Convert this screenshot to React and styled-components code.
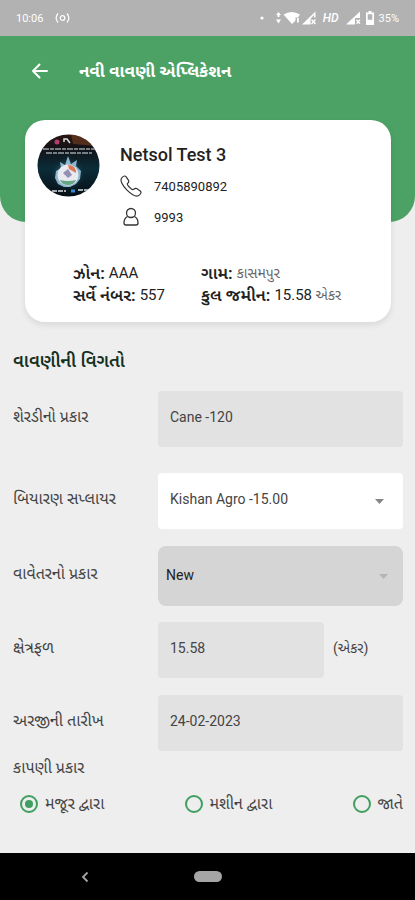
import React, { useState } from "react";
import styled, { createGlobalStyle } from "styled-components";

const GlobalStyle = createGlobalStyle`
  *, *::before, *::after { box-sizing: border-box; }
  body {
    margin: 0;
    background: #eeeeee;
    color: #444;
    font-family: Roboto, "Noto Sans Gujarati", "Noto Sans", sans-serif;
    font-size: 14px;
  }
  button, input, select { font: inherit; color: inherit; }
`;

const Screen = styled.div`
  display: flex;
  flex-direction: column;
  min-height: 100vh;
`;

const StatusBar = styled.div`
  display: flex;
  align-items: center;
  justify-content: space-between;
  height: 36px;
  padding: 0 16px;
  background: #b2b2b2;
  color: #fff;
  font-size: 11px;
`;

const StatusGroup = styled.div`
  display: flex;
  align-items: center;
  gap: ${(p) => p.$gap}px;
`;

const Network = styled.span`
  margin-right: 2px;
  font-size: 12px;
  font-style: italic;
  font-weight: 500;
`;

const Hero = styled.header`
  display: flex;
  align-items: flex-start;
  height: 186px;
  padding: 19px 24px;
  border-radius: 0 0 26px 26px;
  background: #4ba264;
  color: #fff;
`;

const BackButton = styled.button`
  display: flex;
  align-items: center;
  justify-content: center;
  width: 32px;
  height: 32px;
  margin-right: 23px;
  padding: 0;
  border: 0;
  background: none;
`;

const PageTitle = styled.h1`
  margin: 0;
  font-size: 17px;
  font-weight: 700;
  line-height: 32px;
`;

const Card = styled.section`
  margin: -102px 24px 0 25px;
  padding: 14px 12px 16px;
  border-radius: 20px;
  background: #fff;
  box-shadow: 0 3px 6px rgba(0, 0, 0, 0.09);
  color: #222;
`;

const Profile = styled.div`
  display: flex;
  gap: 20px;
`;

const ProfileText = styled.div`
  display: flex;
  flex-direction: column;
  padding-top: 8px;
`;

const Name = styled.h2`
  margin: 0 0 6px;
  font-size: 18px;
  font-weight: 500;
  line-height: 26px;
`;

const Contact = styled.div`
  display: grid;
  grid-template-columns: 22px auto;
  align-items: center;
  column-gap: 12px;
  height: 31px;
  padding-bottom: 7px;
  font-size: 13px;
`;

const Facts = styled.dl`
  display: grid;
  grid-template-columns: 128px 1fr;
  margin: 26px 0 0;
  padding-left: 36px;
`;

const Fact = styled.div`
  display: flex;
  gap: 4px;
  font-size: 17px;
  line-height: 22px;
  white-space: nowrap;
`;

const FactName = styled.dt`
  font-weight: 600;
`;

const FactValue = styled.dd`
  margin: 0;
  font-size: ${(p) => (p.$small ? 14 : 15)}px;
  color: ${(p) => (p.$small ? "#666" : "#222")};
`;

const Unit = styled.small`
  font-size: 14px;
  color: #666;
`;

const Form = styled.form`
  display: flex;
  flex-direction: column;
  flex: 1;
  padding: 27px 12px 24px 13px;
`;

const SectionTitle = styled.h2`
  margin: 0 0 18px;
  color: #14301f;
  font-size: 18px;
  font-weight: 600;
  line-height: 24px;
`;

const FieldRow = styled.div`
  display: grid;
  grid-template-columns: 145px 1fr;
  align-items: center;
  margin-bottom: ${(p) => p.$after}px;
`;

const Label = styled.label`
  padding-bottom: 4px;
  font-size: 16px;
  line-height: 24px;
`;

const FieldLine = styled.div`
  display: grid;
  grid-template-columns: ${(p) => (p.$unit ? "1fr 79px" : "1fr")};
`;

const TextBox = styled.input`
  width: 100%;
  min-width: 0;
  height: 56px;
  padding: 0 12px 4px;
  border: 0;
  border-radius: 4px;
  background: #e2e2e2;
`;

const FieldUnit = styled.span`
  padding-left: 9px;
  line-height: 52px;
`;

const SelectWrap = styled.div`
  display: grid;
  align-items: center;

  > * { grid-area: 1 / 1; }
  > svg {
    justify-self: end;
    margin-right: ${(p) => (p.$muted ? 15 : 19)}px;
    color: ${(p) => (p.$muted ? "#b5b5b5" : "#858585")};
    pointer-events: none;
  }
`;

const Select = styled.select`
  appearance: none;
  width: 100%;
  height: ${(p) => (p.$muted ? 60 : 56)}px;
  padding: ${(p) => (p.$muted ? "0 32px 2px 8px" : "0 36px 4px 12px")};
  border: 0;
  border-radius: ${(p) => (p.$muted ? 8 : 4)}px;
  background: ${(p) => (p.$muted ? "#d5d5d5" : "#fff")};
  opacity: 1;
  color: ${(p) => (p.$muted ? "#222" : "#444")};
`;

const Harvest = styled.fieldset`
  display: grid;
  margin: 0;
  padding: 0;
  border: 0;
  font-size: 16px;
`;

const Legend = styled.legend`
  padding: 0;
  line-height: 24px;
`;

const Choices = styled.div`
  display: flex;
  justify-content: space-between;
  padding: 12px 0 0 7px;
`;

const Choice = styled.label`
  display: flex;
  align-items: center;
  gap: 7px;
  line-height: 24px;
`;

const Radio = styled.input`
  appearance: none;
  display: grid;
  place-items: center;
  width: 18px;
  height: 18px;
  margin: 0;
  border: 2px solid #3f9f61;
  border-radius: 50%;

  &:checked::before {
    content: "";
    width: 8px;
    height: 8px;
    border-radius: 50%;
    background: #3f9f61;
  }
`;

const NavBar = styled.nav`
  display: grid;
  grid-template-columns: 1fr 28px 1fr;
  align-items: center;
  height: 47px;
  background: #000;
`;

const NavBack = styled.button`
  display: flex;
  justify-self: center;
  margin-right: 24px;
  padding: 4px;
  border: 0;
  background: none;
`;

const NavHome = styled.button`
  height: 11px;
  padding: 0;
  border: 0;
  border-radius: 6px;
  background: #a5a5a5;
`;

const HotspotIcon = () => (
  <svg width="15" height="12" viewBox="0 0 15 12" fill="none" stroke="#fff" strokeWidth="1.2" aria-hidden="true">
    <circle cx="7.5" cy="6" r="2.3" />
    <path d="M3 1.500Q-.8 6 3 10.500M12 1.500Q15.800 6 12 10.500" />
  </svg>
);

const StatusIcons = () => (
  <svg width="58" height="16" viewBox="0 0 58 16" fill="#fff" aria-hidden="true">
    <circle cx="2" cy="8" r="1.600" />
    <path d="M18.500 2l2.500 3h-1.500v2h-2V5H16zM18.500 13.500l2.500-4h-5z" />
    <path d="M23.500 4.500Q31.500-.5 40 4.500L38 7.500H35.500V10.500L32 14z" />
    <path d="M37 8h1.800v4.500H37z" />
    <path d="M42 14.500L55.500 1.500V7.500h-1.500V5L47 12.500h3.500v2z" />
    <path d="M45 13.500l5.500-5.500v5.500z" />
    <path d="M51.500 9.500l4 4.500m0-4.500l-4 4.500" stroke="#fff" strokeWidth="1.300" />
  </svg>
);

const SecondSignal = () => (
  <svg width="15" height="16" viewBox="0 0 15 16" fill="#fff" aria-hidden="true">
    <path d="M0 14.500L14 1.500V8H9v6.500z" />
    <path d="M10.500 9.800l3.500 4m0-4l-3.500 4" stroke="#fff" strokeWidth="1.300" />
  </svg>
);

const BatteryIcon = () => (
  <svg width="8" height="14" viewBox="0 0 8 14" aria-hidden="true">
    <path d="M2.500 0h3v1.500H8V14H0V1.500h2.500zM1.700 3.200v5.500h4.600v-5.500z" fill="#fff" fillRule="evenodd" />
  </svg>
);

const ArrowIcon = () => (
  <svg width="18" height="16" viewBox="0 0 18 16" fill="none" stroke="#fff" strokeWidth="2" strokeLinecap="round" strokeLinejoin="round" aria-hidden="true">
    <path d="M16 8H2M8.500 1.500L2 8l6.500 6.500" />
  </svg>
);

const PhoneIcon = () => (
  <svg width="22" height="22" viewBox="0 0 22 22" fill="none" stroke="#333" strokeWidth="1.200" strokeLinejoin="round" aria-hidden="true">
    <path d="M2.200 2.400C3.800.5 5.300.6 6.400 2.200L8.500 5.400C9.400 6.800 8.600 7.500 7.600 8.500C6.900 9.300 7.500 10 8.300 11L11 13.700C12 14.500 12.800 15.100 13.600 14.400C14.700 13.400 15.300 12.700 16.700 13.600L19.900 15.700C21.400 16.800 21.500 18.200 19.600 19.900C16.800 22.600 11.300 19.300 6.800 14.800C2.500 10.500-.8 5.200 2.200 2.400Z" />
  </svg>
);

const PersonIcon = () => (
  <svg width="22" height="20" viewBox="0 0 22 20" fill="none" stroke="#333" strokeWidth="1.300" strokeLinejoin="round" aria-hidden="true">
    <circle cx="11" cy="6" r="4.500" />
    <path d="M7.500 9.500C5 10.700 4 13 4 16Q4 18 6 18H16Q18 18 18 16C18 13 17 10.700 14.500 9.500" />
  </svg>
);

const CaretIcon = () => (
  <svg width="9" height="5" viewBox="0 0 9 5" fill="currentColor" aria-hidden="true">
    <path d="M0 0h9L4.500 5z" />
  </svg>
);

const ChevronIcon = () => (
  <svg width="8" height="12" viewBox="0 0 8 12" fill="none" stroke="#a5a5a5" strokeWidth="1.800" aria-hidden="true">
    <path d="M6.500 1.500L2 6l4.500 4.500" />
  </svg>
);

const Avatar = () => (
  <svg width="63" height="63" viewBox="0 0 63 63" role="img" aria-label="Netsol Test 3">
    <defs>
      <clipPath id="avatar-round"><circle cx="31.500" cy="31.500" r="31" /></clipPath>
      <linearGradient id="avatar-night" x2="0" y2="1">
        <stop offset="0" stopColor="#2b1711" />
        <stop offset=".24" stopColor="#111217" />
        <stop offset=".55" stopColor="#0b2c38" />
        <stop offset="1" stopColor="#070d14" />
      </linearGradient>
      <radialGradient id="avatar-glow">
        <stop offset="0" stopColor="#77b8d4" />
        <stop offset="1" stopColor="#164a62" stopOpacity="0" />
      </radialGradient>
    </defs>
    <g clipPath="url(#avatar-round)">
      <path fill="url(#avatar-night)" d="M0 0h63v63H0z" />
      <path fill="#77411f" opacity=".6" d="M34 0h20l6 12-24-2z" />
      <circle cx="20" cy="8" r="2.500" fill="#b43d70" />
      <path d="M27 8V5h3l3 4" fill="none" stroke="#ddd" strokeWidth="1.500" />
      <path d="M6 15h52M9 19h46" stroke="#dfe8ec" strokeDasharray="6 1 4 1" />
      <circle cx="31" cy="40" r="17" fill="url(#avatar-glow)" opacity=".7" />
      <path d="M31 22l3 8 6-4-1 6 5 5-1 8-4 5-6 3h-6l-6-3-3-6 1-7 5-3-1-6 5 3z" fill="#8eb6cd" />
      <circle cx="31" cy="41" r="10.500" fill="#e8eaf0" />
      <path d="M31 31q8 0 8 8l-7-4z" fill="#dd7653" />
      <path d="M23 46q8 2 16 0-2 5-8 5t-8-5" fill="#67a587" />
      <path d="M26 39l5-4 4 6-4 3z" fill="#9490b5" />
      <path d="M15 57h14M41 56h10" stroke="#d9e1e4" strokeWidth="1.500" strokeDasharray="5 1" />
      <path d="M34 57h4" stroke="#348bd5" strokeWidth="3" />
    </g>
  </svg>
);

const FACTS = [
  { name: "ઝોન:", value: "AAA" },
  { name: "ગામ:", value: "કાસમપુર", small: true },
  { name: "સર્વે નંબર:", value: "557" },
  { name: "કુલ જમીન:", value: "15.58", unit: "એકર" },
];

const FIELDS = [
  { id: "cane", label: "શેરડીનો પ્રકાર", value: "Cane -120", after: 26 },
  { id: "seed", label: "બિયારણ સપ્લાયર", value: "Kishan Agro -15.00", select: true, after: 17 },
  { id: "planting", label: "વાવેતરનો પ્રકાર", value: "New", select: true, muted: true, after: 16 },
  { id: "area", label: "ક્ષેત્રફળ", value: "15.58", unit: "(એકર)", after: 17 },
  { id: "date", label: "અરજીની તારીખ", value: "24-02-2023", after: 5 },
];

const HARVEST = ["મજૂર દ્વારા", "મશીન દ્વારા", "જાતે"];

function Field({ id, label, value, select, muted, unit, after }) {
  return (
    <FieldRow $after={after}>
      <Label htmlFor={id}>{label}</Label>
      {select ? (
        <SelectWrap $muted={muted}>
          <Select id={id} $muted={muted} disabled={muted} defaultValue={value}>
            <option>{value}</option>
          </Select>
          <CaretIcon />
        </SelectWrap>
      ) : (
        <FieldLine $unit={unit}>
          <TextBox id={id} value={value} readOnly />
          {unit && <FieldUnit>{unit}</FieldUnit>}
        </FieldLine>
      )}
    </FieldRow>
  );
}

export default function App() {
  const [harvest, setHarvest] = useState(HARVEST[0]);
  return (
    <Screen>
      <GlobalStyle />
      <StatusBar>
        <StatusGroup $gap={12}>
          <span>10:06</span>
          <HotspotIcon />
        </StatusGroup>
        <StatusGroup $gap={5}>
          <StatusIcons />
          <Network>HD</Network>
          <SecondSignal />
          <BatteryIcon />
          <span>35%</span>
        </StatusGroup>
      </StatusBar>
      <Hero>
        <BackButton type="button" aria-label="Back"><ArrowIcon /></BackButton>
        <PageTitle>નવી વાવણી એપ્લિકેશન</PageTitle>
      </Hero>
      <Card>
        <Profile>
          <Avatar />
          <ProfileText>
            <Name>Netsol Test 3</Name>
            <Contact><PhoneIcon /><span>7405890892</span></Contact>
            <Contact><PersonIcon /><span>9993</span></Contact>
          </ProfileText>
        </Profile>
        <Facts>
          {FACTS.map((f) => (
            <Fact key={f.name}>
              <FactName>{f.name}</FactName>
              <FactValue $small={f.small}>
                {f.value}{f.unit && <Unit> {f.unit}</Unit>}
              </FactValue>
            </Fact>
          ))}
        </Facts>
      </Card>
      <Form>
        <SectionTitle>વાવણીની વિગતો</SectionTitle>
        {FIELDS.map((f) => <Field key={f.id} {...f} />)}
        <Harvest>
          <Legend>કાપણી પ્રકાર</Legend>
          <Choices>
            {HARVEST.map((h) => (
              <Choice key={h}>
                <Radio type="radio" name="harvest" checked={harvest === h} onChange={() => setHarvest(h)} />
                {h}
              </Choice>
            ))}
          </Choices>
        </Harvest>
      </Form>
      <NavBar>
        <NavBack type="button" aria-label="Back"><ChevronIcon /></NavBack>
        <NavHome type="button" aria-label="Home" />
      </NavBar>
    </Screen>
  );
}
